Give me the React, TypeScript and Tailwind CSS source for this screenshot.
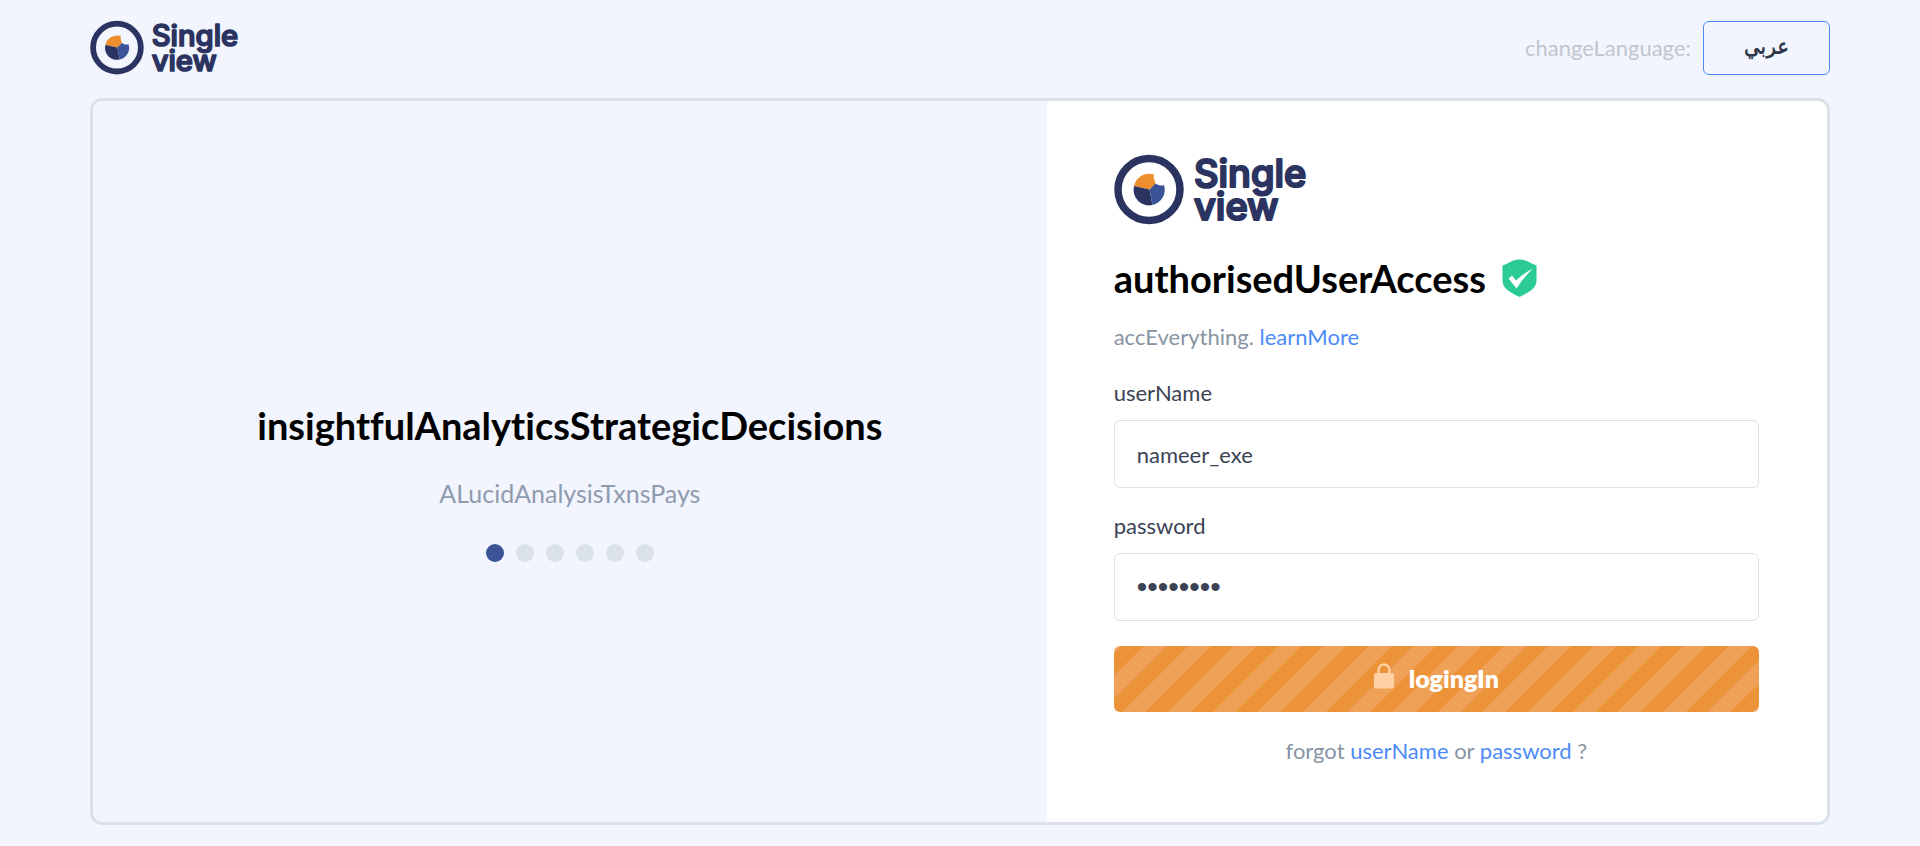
import React from "react";

function Logo({ className }: { className: string }) {
  return (
    <svg viewBox="0 0 196 70" className={`overflow-visible ${className}`} role="img" aria-label="Single view">
      <circle cx="35" cy="34.500" r="31" fill="none" stroke="#2b3460" strokeWidth="7.500" />
      <path d="M35.500 34.500L20 31A15.500 15.500 0 0 1 40 19.500Q39 23 40.500 25L41.500 29Z" fill="#ee8f2f" />
      <path d="M35.500 34.500L20 31A15.500 15.500 0 0 0 38.500 50Z" fill="#2b3460" />
      <path d="M35.500 34.500L41.500 28.500Q46 31.500 50 30A15.500 15.500 0 0 1 38.500 50Z" fill="#3a5497" />
      <g
        fill="#2b3460"
        stroke="#2b3460"
        strokeWidth="2.200"
        strokeLinejoin="round"
        strokeLinecap="round"
        fontFamily="Inter, sans-serif"
        fontWeight="500"
        fontSize="38"
      >
        <text x="80" y="32">Single</text>
        <text x="80" y="65">view</text>
      </g>
    </svg>
  );
}

function ShieldCheck() {
  return (
    <svg viewBox="0 0 35 38" className="h-[38px] w-[35px] shrink-0" aria-hidden="true">
      <path d="M0.500 6.500C6 5 10 0.500 17.500 0.500S29 5 34.500 6.500V21C34.500 30 27 33 17.500 38C8 33 0.500 30 0.500 21Z" fill="#2acb96" />
      <path d="M6.500 19.500L10 16.500L14 21.500Q22 14 31 9.500Q22 18 14.500 29.500Z" fill="#fff" />
    </svg>
  );
}

function Lock() {
  return (
    <svg viewBox="0 0 20 26" className="mb-1.5 h-[26px] w-5 shrink-0" aria-hidden="true">
      <path d="M4.500 12V7a5.500 5.500 0 0 1 11 0v5" fill="none" stroke="#ffd0a1" strokeWidth="2.400" />
      <rect x="0" y="10" width="20" height="15.500" rx="2" fill="#ffd0a1" />
    </svg>
  );
}

const slides = [1, 2, 3, 4, 5, 6];
const field =
  "mt-[13px] block h-[68px] w-full rounded-md border border-[#dbe1ea] bg-white px-[22px] text-[#3a4254] outline-none";
const link = "text-[#4d8af7]";

export default function App() {
  return (
    <div className="min-h-screen bg-[#f2f5fe] px-[90px] py-[21px] font-[Lato,sans-serif] [font-variant-ligatures:no-common-ligatures]">
      <header className="flex items-start justify-between">
        <Logo className="h-[54px] w-[151px]" />
        <div className="flex items-center gap-3">
          <span className="text-[22px] leading-7 text-[#c0c6ce]">changeLanguage:</span>
          <button
            type="button"
            lang="ar"
            className="h-[54px] w-[127px] rounded-md border border-[#4d8af7] pb-1 font-['DejaVu_Sans',sans-serif] text-xl text-[#2f374b] [text-shadow:0_1px_0_currentColor]"
          >
            عربي
          </button>
        </div>
      </header>

      <main className="mt-[23px] flex overflow-hidden rounded-xl border-3 border-[#dae1e8]">
        <section className="flex w-[55%] flex-col items-center justify-center pt-10">
          <h1 className="text-[38px] leading-[48px] font-bold text-black">insightfulAnalyticsStrategicDecisions</h1>
          <p className="mt-7 text-[25px] leading-8 text-[#8f9bad]">ALucidAnalysisTxnsPays</p>
          <div className="mt-[35px] flex gap-3">
            {slides.map((n) => (
              <button
                key={n}
                type="button"
                aria-label={`Slide ${n}`}
                className={n === 1 ? "size-[18px] rounded-full bg-[#3a5497]" : "size-[18px] rounded-full bg-[#dae1e8]"}
              />
            ))}
          </div>
        </section>

        <section className="w-[45%] bg-white pt-[54px] pr-[68px] pb-[57px] pl-[67px]">
          <Logo className="h-[70px] w-[196px]" />
          <h2 className="mt-[29px] flex items-center gap-4 text-[38px] leading-[48px] font-bold text-black">
            authorisedUserAccess
            <ShieldCheck />
          </h2>
          <p className="mt-[21px] text-[22px] leading-7 text-[#8794a3]">
            accEverything. <a href="#learn" className={link}>learnMore</a>
          </p>
          <form className="mt-7" onSubmit={(e) => e.preventDefault()}>
            <label htmlFor="username" className="block text-[22px] leading-7 text-[#3a4254]">userName</label>
            <input id="username" type="text" defaultValue="nameer_exe" className={`${field} text-[22px]`} />
            <label htmlFor="password" className="mt-6 block text-[22px] leading-7 text-[#3a4254]">password</label>
            <input
              id="password"
              type="password"
              defaultValue="password"
              className={`${field} font-['Liberation_Sans',sans-serif] text-3xl`}
            />
            <button
              type="submit"
              className="mt-[25px] flex h-[66px] w-full items-center justify-center gap-[15px] rounded-md bg-[#ec9239] bg-[linear-gradient(-45deg,rgba(255,255,255,0.15)_25%,transparent_25%,transparent_50%,rgba(255,255,255,0.15)_50%,rgba(255,255,255,0.15)_75%,transparent_75%,transparent)] bg-size-[45px_45px] bg-position-[7px_0px] text-[25px] font-extrabold text-white"
            >
              <Lock />
              logingIn
            </button>
          </form>
          <p className="mt-[25px] text-center text-[22px] leading-7 text-[#8794a3]">
            forgot <a href="#username-help" className={link}>userName</a> or{" "}
            <a href="#password-help" className={link}>password</a> ?
          </p>
        </section>
      </main>
    </div>
  );
}
